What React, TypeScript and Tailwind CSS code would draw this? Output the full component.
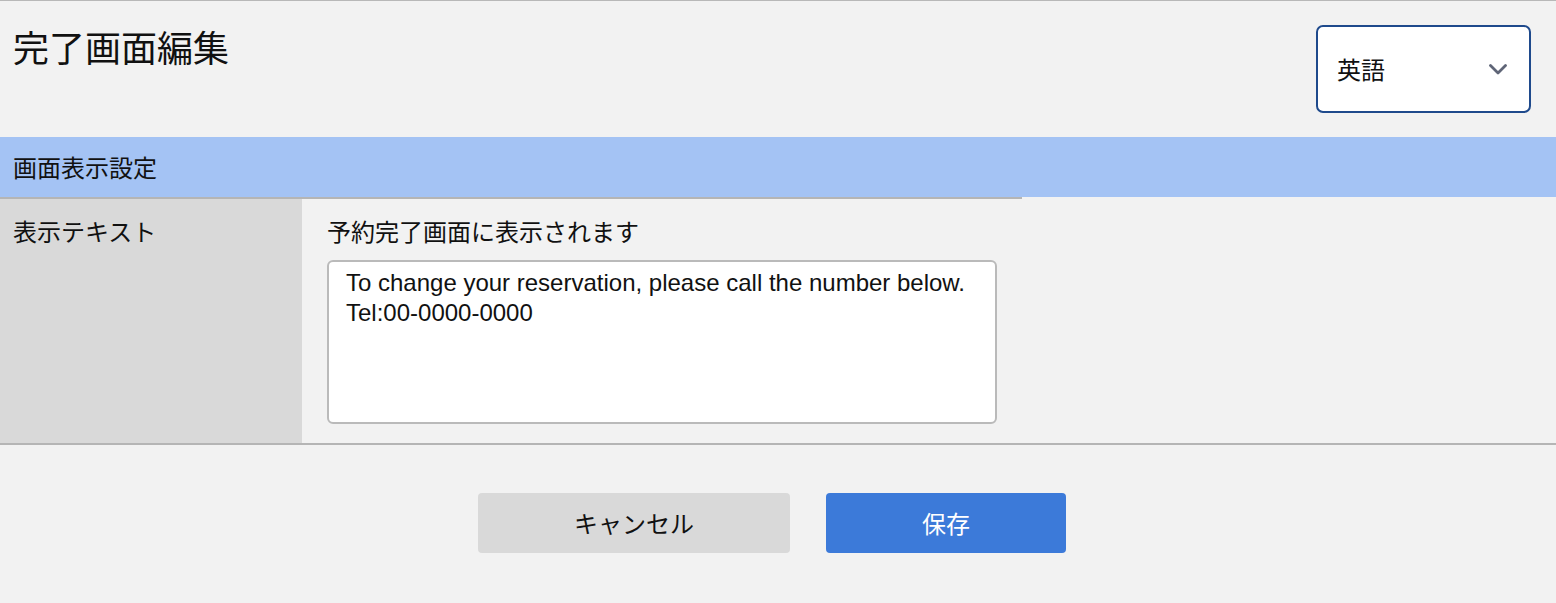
import { useState } from 'react';

const jp = { fontFamily: '"Noto Sans CJK JP", "Noto Sans", sans-serif' };

function LangSelect() {
  const [lang] = useState('英語');
  return (
    <div className="mt-[24px] mr-[25px] flex h-[88px] w-[215px] items-center justify-between rounded-[7px] border-2 border-[#1f4a8c] bg-white pl-[19px] pr-[22px]">
      <span className="text-[24px] leading-none text-[#111]">{lang}</span>
      <svg width="18" height="11" viewBox="0 0 18 11" fill="none">
        <path d="M1.5 1.5 L9 9 L16.5 1.5" stroke="#5f6577" strokeWidth="2.8" strokeLinecap="round" strokeLinejoin="round" />
      </svg>
    </div>
  );
}

export default function App() {
  const [text, setText] = useState('To change your reservation, please call the number below.\nTel:00-0000-0000');

  return (
    <div className="flex h-[603px] w-full flex-col overflow-hidden border-t border-[#b8b8b8] bg-[#f2f2f2] text-[#111]" style={jp}>
      {/* page title + language */}
      <div className="flex h-[136px] items-start justify-between">
        <h1 className="ml-[13px] mt-[18px] text-[36px] font-normal leading-[54px]">完了画面編集</h1>
        <LangSelect />
      </div>

      {/* section header */}
      <div className="flex h-[60px] items-center bg-[#a4c3f4] px-[13px] text-[24px]">画面表示設定</div>

      {/* table */}
      <div className="w-[1022px] border-t-2 border-[#b5b5b5]" />
      <div className="flex border-b-2 border-[#b5b5b5]">
        <div className="w-[302px] shrink-0 bg-[#d9d9d9] px-[13px] pt-[17px] text-[24px] leading-[30px]">表示テキスト</div>
        <div className="flex flex-col pl-[25px] pt-[17px] pb-[19px]">
          <div className="text-[24px] leading-[30px]">予約完了画面に表示されます</div>
          <textarea
            value={text}
            onChange={e => setText(e.target.value)}
            className="mt-[14px] h-[164px] w-[670px] resize-none rounded-[6px] border-2 border-[#bababa] bg-white px-[17px] pt-[6px] text-[24px] leading-[30px] text-[#111] outline-none"
            style={{ fontFamily: '"Liberation Sans", Arial, sans-serif' }}
          />
        </div>
      </div>

      {/* actions */}
      <div className="mt-[48px] flex justify-center gap-[36px] pr-[12px]">
        <button className="h-[60px] w-[312px] rounded-[4px] bg-[#d9d9d9] text-[24px] text-[#111]">キャンセル</button>
        <button className="h-[60px] w-[240px] rounded-[4px] bg-[#3c7ad9] text-[24px] text-white">保存</button>
      </div>
    </div>
  );
}
